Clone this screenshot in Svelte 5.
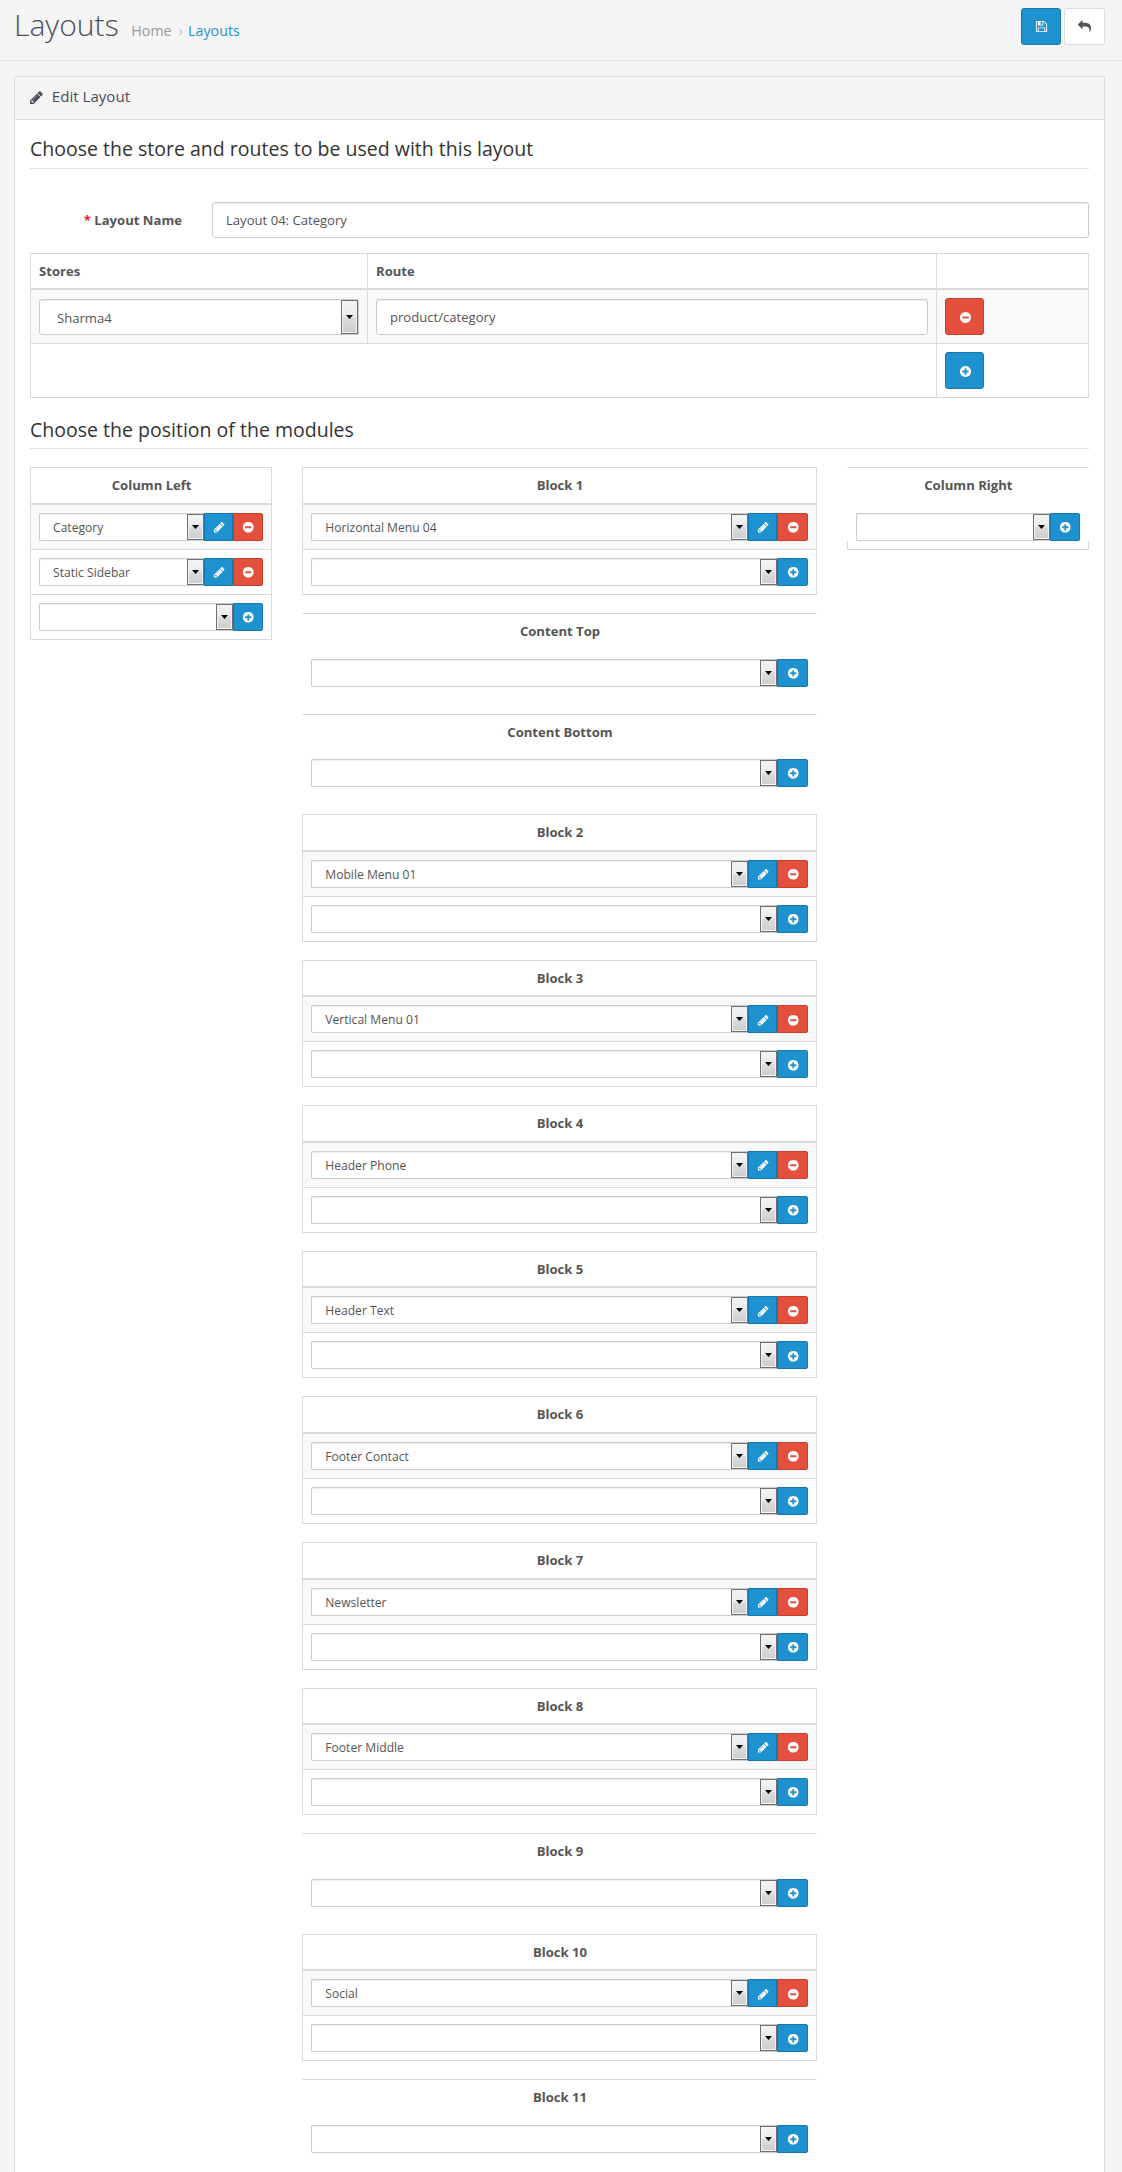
<script>
  const left = [{ title: 'Column Left', modules: ['Category', 'Static Sidebar'] }];
  const right = [{ title: 'Column Right', modules: [], closed: true }];
  const middle = [
    { title: 'Block 1', modules: ['Horizontal Menu 04'] },
    { title: 'Content Top', modules: [] },
    { title: 'Content Bottom', modules: [] },
    { title: 'Block 2', modules: ['Mobile Menu 01'] },
    { title: 'Block 3', modules: ['Vertical Menu 01'] },
    { title: 'Block 4', modules: ['Header Phone'] },
    { title: 'Block 5', modules: ['Header Text'] },
    { title: 'Block 6', modules: ['Footer Contact'] },
    { title: 'Block 7', modules: ['Newsletter'] },
    { title: 'Block 8', modules: ['Footer Middle'] },
    { title: 'Block 9', modules: [] },
    { title: 'Block 10', modules: ['Social'] },
    { title: 'Block 11', modules: [] }
  ];
  const columns = [left, middle, right];

  const disc =
    'm320-64q0 209-103 385.5t-279.500 279.500-385.500 103-385.500-103-279.500-279.500-103-385.500 103-385.500 279.500-279.500 385.500-103 385.500 103 279.500 279.500 103 385.500z';
  const icons = {
    pencil:
      'M491 1536l91-91-235-235-91 91v107h128v128h107zm523-928q0-22-22-22-10 0-17 7l-542 542q-7 7-7 17 0 22 22 22 10 0 17-7l542-542q7-7 7-17zm-54-192l416 416-832 832h-416v-416zm683 96q0 53-37 90l-166 166-416-416 166-165q36-38 90-38 53 0 91 38l235 234q37 39 37 91z',
    plus:
      'M1344 960v-128q0-26-19-45t-45-19h-256v-256q0-26-19-45t-45-19h-128q-26 0-45 19t-19 45v256h-256q-26 0-45 19t-19 45v128q0 26 19 45t45 19h256v256q0 26 19 45t45 19h128q26 0 45-19t19-45v-256h256q26 0 45-19t19-45z' + disc,
    minus:
      'M1344 960v-128q0-26-19-45t-45-19h-768q-26 0-45 19t-19 45v128q0 26 19 45t45 19h768q26 0 45-19t19-45z' + disc,
    save:
      'M512 1536h768v-384h-768v384zm896 0h128v-896q0-14-10-38.500t-20-34.500l-281-281q-10-10-34-20t-39-10v416q0 40-28 68t-68 28h-576q-40 0-68-28t-28-68v-416h-128v1280h128v-416q0-40 28-68t68-28h832q40 0 68 28t28 68v416zm-384-928v-320q0-13-9.500-22.500t-22.500-9.500h-192q-13 0-22.500 9.500t-9.500 22.500v320q0 13 9.500 22.500t22.500 9.500h192q13 0 22.500-9.500t9.500-22.500zm640 32v928q0 40-28 68t-68 28h-1344q-40 0-68-28t-28-68v-1344q0-40 28-68t68-28h928q40 0 88 20t76 48l280 280q28 28 48 76t20 88z',
    reply:
      'M1792 1120q0 166-127 451-3 7-10.500 24t-13.500 30-13 22q-12 17-28 17-15 0-23.500-10t-8.500-25q0-9 2.500-26.500t2.500-23.500q5-68 5-123 0-101-17.500-181t-48.500-138.500-80-101-105.500-69.500-133-42.500-154-21.500-175.500-6h-224v256q0 26-19 45t-45 19-45-19l-512-512q-19-19-19-45t19-45l512-512q19-19 45-19t45 19 19 45v256h224q713 0 875 403 53 134 53 333z'
  };
</script>

{#snippet icon(name)}
  <svg class="icon" viewBox="0 0 1792 1792" aria-hidden="true"><path d={icons[name]} /></svg>
{/snippet}

{#snippet drop()}
  <span class="drop"><svg viewBox="0 0 7 4"><path d="M0 0h7L3.500 4z" /></svg></span>
{/snippet}

<div class="page">
  <header>
    <h1>Layouts</h1>
    <nav>
      <a href="#home">Home</a><span class="sep">›</span><a class="current" href="#layouts">Layouts</a>
    </nav>
    <div class="actions">
      <button class="btn primary" aria-label="Save">{@render icon('save')}</button>
      <button class="btn plain" aria-label="Back">{@render icon('reply')}</button>
    </div>
  </header>

  <main class="panel">
    <div class="heading">{@render icon('pencil')}<h3>Edit Layout</h3></div>
    <div class="body">
      <h2>Choose the store and routes to be used with this layout</h2>
      <div class="field">
        <span class="label"><span class="star">*</span> Layout Name</span>
        <div class="control">Layout 04: Category</div>
      </div>

      <div class="routes">
        <div class="tr head">
          <div class="td">Stores</div>
          <div class="td">Route</div>
          <div class="td"></div>
        </div>
        <div class="tr striped">
          <div class="td"><div class="control select">Sharma4{@render drop()}</div></div>
          <div class="td"><div class="control">product/category</div></div>
          <div class="td"><button class="btn danger" aria-label="Remove">{@render icon('minus')}</button></div>
        </div>
        <div class="tr foot">
          <div class="td"></div>
          <div class="td"><button class="btn primary add" aria-label="Add">{@render icon('plus')}</button></div>
        </div>
      </div>

      <h2 class="second">Choose the position of the modules</h2>
      <div class="columns">
        {#each columns as blocks}
          <div class="column">
            {#each blocks as block}
              <section class="block" class:empty={!block.modules.length} class:closed={block.closed}>
                <div class="title">{block.title}</div>
                {#each block.modules as name, i}
                  <div class="row" class:striped={i % 2 === 0}>
                    <div class="small">{name}{@render drop()}</div>
                    <button class="sbtn primary edit" aria-label="Edit">{@render icon('pencil')}</button>
                    <button class="sbtn danger last" aria-label="Remove">{@render icon('minus')}</button>
                  </div>
                {/each}
                <div class="row">
                  <div class="small">{@render drop()}</div>
                  <button class="sbtn primary last" aria-label="Add">{@render icon('plus')}</button>
                </div>
              </section>
            {/each}
          </div>
        {/each}
      </div>
    </div>
  </main>
</div>

<style>
  :global(body) {
    margin: 0;
    background: #f5f5f5;
  }
  .page,
  .page * {
    box-sizing: border-box;
  }
  .page {
    width: 1122px;
    height: 2172px;
    overflow: hidden;
    font: 13.1px/20px 'Open Sans', sans-serif;
    color: #555;
  }
  h1,
  h2,
  h3 {
    margin: 0;
    font-weight: 400;
  }
  button {
    margin: 0;
    padding: 0;
    font: inherit;
    display: flex;
    align-items: center;
    justify-content: center;
    flex: none;
    border: 1px solid;
  }
  .icon {
    display: block;
    width: 13px;
    height: 13px;
    fill: currentColor;
  }

  header {
    height: 61px;
    padding: 8px 17px 0 14px;
    display: flex;
    align-items: baseline;
    border-bottom: 1px solid #e3e3e3;
  }
  h1 {
    width: 104px;
    font-size: 30.1px;
    line-height: 33px;
    font-weight: 300;
    color: #4c4d5a;
  }
  nav {
    margin-left: 13.300px;
    font-size: 14.25px;
    display: flex;
  }
  nav a {
    color: #999;
    text-decoration: none;
  }
  nav a.current {
    color: #1e91cf;
  }
  .sep {
    width: 16.500px;
    padding-left: 2px;
    text-align: center;
    color: #bbb;
  }
  .actions {
    margin-left: auto;
    align-self: flex-start;
    display: flex;
    gap: 3px;
  }
  .btn {
    width: 39px;
    height: 37px;
    border-radius: 3px;
  }
  .td .btn {
    padding: 1px 0 0 1px;
  }
  .actions .btn {
    width: 40px;
  }
  .actions .plain {
    width: 41px;
    background: #fff;
    border-color: #ddd;
    color: #555;
  }
  .primary {
    background: #1e91cf;
    border-color: #1978ab;
    color: #fff;
  }
  .danger {
    background: #e4503d;
    border-color: #c63f2d;
    color: #fff;
  }

  .panel {
    margin: 15px 17px 0 14px;
    height: 2200px;
    border: 1px solid #dcdcdc;
    background: #fff;
  }
  .heading {
    height: 43px;
    padding: 0 0 2px 14px;
    display: flex;
    align-items: center;
    gap: 7.8px;
    border-bottom: 1px solid #dcdcdc;
    background: #f5f5f5;
    color: #4c4d5a;
  }
  .heading .icon {
    width: 15px;
    height: 15px;
  }
  h3 {
    font-size: 15.1px;
    line-height: 19px;
    padding-bottom: 1px;
  }
  .body {
    padding: 15px 15px 0;
  }
  h2 {
    height: 34px;
    padding-top: 1px;
    line-height: 26px;
    font-size: 19.52px;
    color: #333;
    border-bottom: 1px solid #e2e2e2;
  }
  h2.second {
    height: 33px;
    margin-top: 18px;
  }

  .field {
    margin: 33px 0 15px;
    display: grid;
    grid-template-columns: 152px 1fr;
    column-gap: 30px;
    align-items: center;
  }
  .label {
    text-align: right;
    font-weight: 700;
  }
  .star {
    color: #e8202a;
  }
  .control {
    position: relative;
    height: 36px;
    padding: 0 13px;
    line-height: 34px;
    border: 1px solid #ccc;
    border-radius: 3px;
    background: #fff;
    box-shadow: inset 0 1px 1px rgba(0, 0, 0, 0.075);
  }
  .control.select {
    padding: 1px 0 0 17px;
  }
  .drop {
    position: absolute;
    top: 0;
    right: 0;
    bottom: 0;
    width: 17px;
    display: flex;
    align-items: center;
    justify-content: center;
    border: 1px solid #707070;
    background: linear-gradient(#f4f4f4, #ebebeb 48%, #dcdcdc 52%, #cdcdcd);
    box-shadow: inset 0 0 0 1px #f3f3f3;
  }
  .drop svg {
    display: block;
    width: 7px;
    height: 4px;
  }

  .routes {
    border: 1px solid #dadada;
  }
  .tr {
    display: grid;
    grid-template-columns: 336px 569px 1fr;
    border-top: 1px solid #dadada;
  }
  .td {
    padding: 8px;
  }
  .td + .td {
    border-left: 1px solid #dadada;
  }
  .tr.head {
    height: 34px;
    border-top: 0;
    font-weight: 700;
  }
  .head .td {
    padding: 7px 8px;
  }
  .head + .tr {
    border-top-width: 2px;
  }
  .striped {
    background: #f9f9f9;
  }
  .striped .control {
    margin-top: 1px;
  }
  .tr.foot {
    grid-template-columns: 905px 1fr;
  }

  .columns {
    margin-top: 18.350px;
    display: grid;
    grid-template-columns: 242.250px 514.500px 242.250px;
    column-gap: 30px;
    align-items: start;
  }
  .block {
    position: relative;
    margin-bottom: 17.970px;
    border: 1px solid #dadada;
  }
  .title {
    height: 34.620px;
    padding-left: 1px;
    line-height: 35.400px;
    text-align: center;
    font-weight: 700;
  }
  .row {
    display: flex;
    padding: 8px;
    border-top: 1px solid #dadada;
  }
  .title + .row {
    border-top-width: 2px;
  }
  .small {
    position: relative;
    flex: 1;
    height: 28px;
    padding: 1px 0 0 13px;
    line-height: 26px;
    font-size: 12.12px;
    border: 1px solid #ccc;
    border-right: 0;
    border-radius: 2px 0 0 2px;
    background: #fff;
    box-shadow: inset 0 1px 1px rgba(0, 0, 0, 0.075);
  }
  .sbtn {
    width: 30.400px;
    height: 28px;
    padding: 1px 0 0 1px;
  }
  .sbtn.edit {
    width: 29.200px;
  }
  .sbtn.last {
    border-radius: 0 2px 2px 0;
  }
  .sbtn .icon {
    width: 12.500px;
    height: 12.500px;
  }
  .block.empty {
    border-color: #dadada transparent transparent;
  }
  .block.empty .row {
    border-top-color: transparent;
  }
  .block.closed {
    border-bottom-color: #dadada;
  }
  .closed::after {
    content: '';
    position: absolute;
    left: -1px;
    right: -1px;
    bottom: 0;
    height: 8px;
    border: solid #dadada;
    border-width: 0 1px;
  }
</style>
